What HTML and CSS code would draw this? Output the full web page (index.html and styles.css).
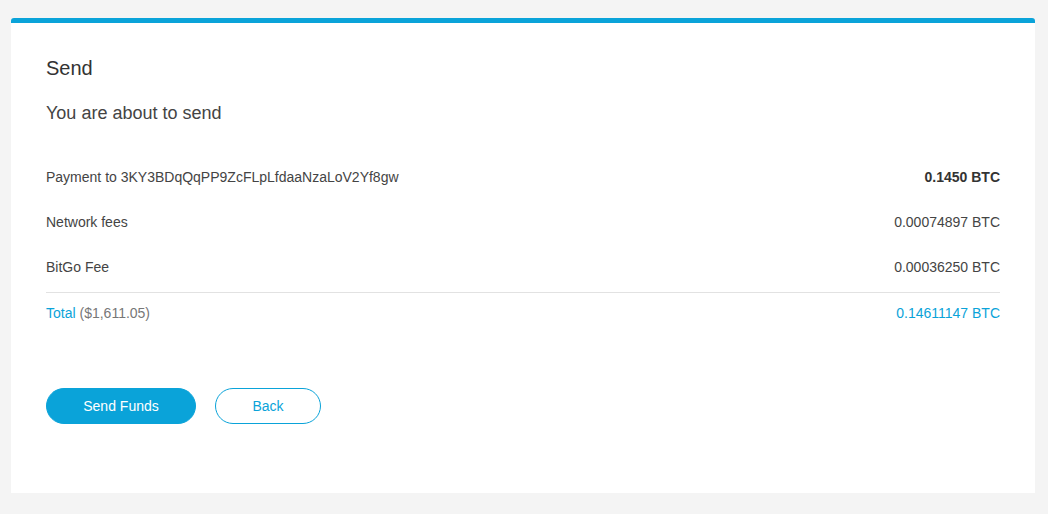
FILE: index.html
```
<!DOCTYPE html>
<html>
<head>
<meta charset="utf-8">
<link rel="stylesheet" href="styles.css">
</head>
<body>
<div class="page">
  <div class="card">
    <h1 class="title">Send</h1>
    <h2 class="subtitle">You are about to send</h2>
    <div class="rows">
      <div class="row">
        <span class="label">Payment to 3KY3BDqQqPP9ZcFLpLfdaaNzaLoV2Yf8gw</span>
        <span class="value strong">0.1450 BTC</span>
      </div>
      <div class="row">
        <span class="label">Network fees</span>
        <span class="value">0.00074897 BTC</span>
      </div>
      <div class="row">
        <span class="label">BitGo Fee</span>
        <span class="value">0.00036250 BTC</span>
      </div>
      <div class="row total">
        <span class="label"><span class="blue">Total</span> <span class="muted">($1,611.05)</span></span>
        <span class="value blue">0.14611147 BTC</span>
      </div>
    </div>
    <div class="actions">
      <button class="btn primary">Send Funds</button>
      <button class="btn secondary">Back</button>
    </div>
  </div>
</div>
</body>
</html>
```
FILE: styles.css
```
html, body {
  margin: 0;
  padding: 0;
  background: #f4f4f4;
  font-family: "Liberation Sans", Arial, sans-serif;
  color: #444;
}
.page {
  padding: 18px 13px 21px 11px;
}
.card {
  background: #fff;
  border-top: 5px solid #0aa3d9;
  border-radius: 3px 3px 0 0;
  padding: 33px 35px 69px 35px;
}
.title {
  margin: 0;
  font-size: 20px;
  line-height: 24px;
  font-weight: normal;
  color: #333;
}
.subtitle {
  margin: 21px 0 0 0;
  font-size: 18px;
  line-height: 24px;
  font-weight: normal;
  color: #444;
}
.rows {
  margin-top: 29px;
}
.row {
  display: flex;
  justify-content: space-between;
  font-size: 14px;
  line-height: 20px;
  padding: 13px 0 12px 0;
}
.row.total {
  margin-top: 3px;
  border-top: 1px solid #e2e2e2;
  padding-top: 10px;
}
.strong {
  font-weight: bold;
  color: #333;
}
.blue {
  color: #0aa3d9;
}
.muted {
  color: #777;
}
.actions {
  display: flex;
  gap: 19px;
  margin-top: 53px;
}
.btn {
  font-family: "Liberation Sans", Arial, sans-serif;
  font-size: 14px;
  height: 36px;
  border-radius: 18px;
  cursor: pointer;
  padding: 0;
}
.primary {
  width: 150px;
  background: #0aa3d9;
  border: 1px solid #0aa3d9;
  color: #fff;
}
.secondary {
  width: 106px;
  background: #fff;
  border: 1px solid #0aa3d9;
  color: #0aa3d9;
}
```
